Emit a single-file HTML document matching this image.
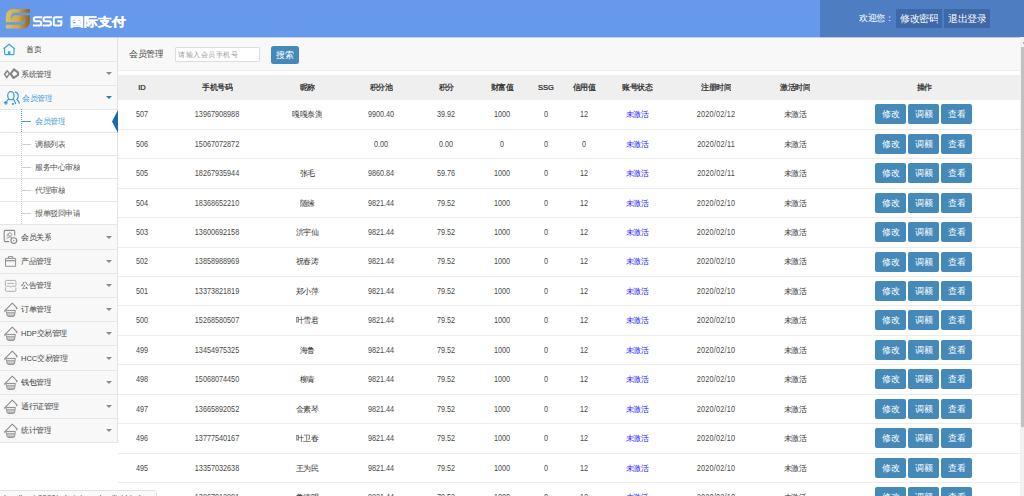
<!DOCTYPE html>
<html><head><meta charset="utf-8">
<style>
*{margin:0;padding:0;box-sizing:border-box}
html,body{width:1024px;height:496px;overflow:hidden;background:#fff;font-family:"Liberation Sans",sans-serif;color:#333}
.abs{position:absolute}
.x{position:absolute;transform-origin:0 0;transform:scale(.5);white-space:nowrap;line-height:1}
#hdr{position:absolute;left:0;top:0;width:1024px;height:37px;background:#6699ec}
#hdr .right{position:absolute;left:820px;top:0;width:204px;height:37px;background:#4f7dc2}
.hbtn{position:absolute;top:9px;height:19px;background:#3f68a8}
#side{position:absolute;left:0;top:37px;width:118px;height:406px;background:#f8f8f8;border-right:1px solid #e3e3e3}
.mi{position:absolute;left:0;width:117px;color:#444}
.mi .x{left:21px;top:7.5px;font-size:15px}
.mi .car{position:absolute;left:105.5px;width:0;height:0;border-left:3px solid transparent;border-right:3px solid transparent;border-top:3px solid #8a8a8a}
.mi svg{position:absolute}
.sub{position:absolute;left:0;width:117px;background:#fff;color:#555}
.bd{position:absolute;left:0;width:117px;height:1px;background:#e6e6e6}
.sub .x{left:35px;top:7.5px;font-size:15px}
.sub .dash{position:absolute;left:22px;width:9px;height:1px;background:#d0d0d0}
#vline{position:absolute;left:21px;top:109.4px;width:1px;height:115px;background:repeating-linear-gradient(to bottom,#c8c8c8 0,#c8c8c8 1px,transparent 1px,transparent 2px)}
#content{position:absolute;left:118px;top:37px;width:902px;height:459px}
#toolbar{position:absolute;left:0;top:0;width:902px;height:34px;background:#f8f8f8;border-bottom:1px solid #eee}
.thead{position:absolute;left:0;width:902px;background:#efefef;color:#262626;-webkit-text-stroke:0.45px #262626}
.tr{position:absolute;left:0;width:902px;height:29.44px;border-bottom:1px solid #ececec;color:#333}
.c{position:absolute;width:240px;text-align:center;white-space:nowrap;font-size:15px;line-height:1;transform:scale(.5);transform-origin:50% 50%}
.c.n{font-size:14.5px;transform:scale(.5,.59);color:#4a4a4a}
.c.dt{letter-spacing:0.4px}
.blue{color:#1a1aff}
.ops{position:absolute;top:4px;height:20px;white-space:nowrap;font-size:0}
.btn{position:relative;display:inline-block;width:31px;height:20px;margin-right:2.1px;background:#4589b9;border-radius:2px;vertical-align:top}
.btn .x{left:6.5px;top:5px;font-size:18px;color:#fff;font-style:normal}
#scroll{position:absolute;left:1020px;top:37px;width:4px;height:459px;background:#f1f1f1}
#thumb{position:absolute;left:1021px;top:47px;width:3px;height:380px;background:#c1c1c1}
#status{position:absolute;left:-1px;top:489.7px;width:158px;height:10px;background:#fafafa;border:1px solid #e2e2e2;border-radius:0 3px 0 0;overflow:hidden}
</style></head><body>
<div id="hdr">
  <svg class="abs" style="left:0;top:0" width="70" height="37" viewBox="0 0 70 37">
    <defs><linearGradient id="g" x1="5.9" y1="0" x2="29.8" y2="0" gradientUnits="userSpaceOnUse"><stop offset="0" stop-color="#dcc063"/><stop offset="0.5" stop-color="#cdaa4c"/><stop offset="1" stop-color="#8a6224"/></linearGradient></defs>
    <path d="M14 8.9 H29.8 V21 Q29.8 28.6 22.5 28.6 H5.9 V16.5 Q5.9 8.9 14 8.9 Z" fill="url(#g)"/>
    <path d="M30 12.8 H15 Q10.8 12.8 10.8 17.8 Q10.8 19.2 11.6 19.2 Q12 15.3 15.5 15.3 H30 Z M5.7 24.7 H20.7 Q24.9 24.7 24.9 19.7 Q24.9 18.3 24.1 18.3 Q23.7 22.2 20.2 22.2 H5.7 Z" fill="#6699ec"/>
    <g fill="none" stroke="#fff" stroke-width="2.05">
    <path d="M42.2 17.2 H35.4 Q33.9 17.2 33.9 18.7 V19.8 Q33.9 21.3 35.4 21.3 H39.7 Q41.2 21.3 41.2 22.8 V23.9 Q41.2 25.4 39.7 25.4 H32.9"/>
    <path d="M51.9 17.2 H45.1 Q43.6 17.2 43.6 18.7 V19.8 Q43.6 21.3 45.1 21.3 H49.4 Q50.9 21.3 50.9 22.8 V23.9 Q50.9 25.4 49.4 25.4 H42.6"/>
    <path d="M62.4 17.2 H55.3 Q53.8 17.2 53.8 18.7 V23.9 Q53.8 25.4 55.3 25.4 H59.9 Q61.4 25.4 61.4 23.9 V21.3 H57.4"/>
    </g>
  </svg>
  <div class="x" style="left:69.5px;top:15.5px;font-size:28px;font-weight:bold;color:#fff;-webkit-text-stroke:0.9px #fff;transform:scale(0.505,0.44)">国际支付</div>
  <div class="right"></div>
  <div class="x" style="left:859px;top:14px;color:#fff;font-size:17px">欢迎您：</div>
  <div class="hbtn" style="left:896px;width:46px"><div class="x" style="left:4px;top:4.5px;font-size:19px;color:#fff">修改密码</div></div>
  <div class="hbtn" style="left:944px;width:46px"><div class="x" style="left:4px;top:4.5px;font-size:19px;color:#fff">退出登录</div></div>
</div>

<div id="side">
<div class="mi" style="top:0px;height:24px"><svg style="left:0;top:1px" width="24" height="24" viewBox="0 0 24 24"><path d="M3.4 10.8 L9.1 6.3 L14.8 10.8" fill="none" stroke="#3ea6e2" stroke-width="1.2" stroke-linejoin="round"/><path d="M4.6 9.9 V15.6 Q4.6 16.6 5.6 16.6 H13 Q14 16.6 14 15.6 V9.9" fill="none" stroke="#3ea6e2" stroke-width="1.15"/><path d="M8 16.6 V14.1 Q8 13 9.2 13 Q10.4 13 10.4 14.1 V16.6 Z" fill="#3ea6e2"/></svg><div class="x" style="left:26px;top:8.20px">首页</div></div><div class="bd" style="top:24px"></div>
<div class="mi" style="top:25px;height:23px"><svg style="left:0;top:0px" width="24" height="24" viewBox="0 0 24 24"><path d="M4.5 12.2 L7.2 8.7 L9.4 11.6 L6.8 15.6 Z" fill="none" stroke="#858585" stroke-width="1.45" stroke-linejoin="round"/><path d="M10.5 11.9 L14 7.4 L18.1 10.6 V12.9 L13.6 16 Z" fill="none" stroke="#858585" stroke-width="2.1" stroke-linejoin="round"/></svg><div class="x" style="top:7.70px">系统管理</div><div class="car" style="top:10.30px;"></div></div><div class="bd" style="top:48px"></div>
<div class="mi" style="top:49px;height:23px"><svg style="left:0;top:0px" width="24" height="24" viewBox="0 0 24 24"><ellipse cx="10.9" cy="9.7" rx="3.2" ry="4.1" fill="none" stroke="#3a9ad9" stroke-width="1.25"/><path d="M8.6 13 L6.8 15.2 M13.2 13.2 Q14.8 15 15.6 17.6 M15.3 6.2 Q18.4 6.9 18.2 10.4 Q18 12.4 16.9 13.4 Q18.7 15 19.4 17.2" fill="none" stroke="#3a9ad9" stroke-width="1.2" stroke-linecap="round"/><path d="M3.9 16.8 H7.7 M5.8 14.9 V18.7" stroke="#3a9ad9" stroke-width="1.4"/><rect x="12" y="17" width="1.8" height="1.8" fill="#3a9ad9"/></svg><div class="x" style="left:22px;color:#3d9ad8;top:7.70px">会员管理</div><div class="car" style="top:10.30px;border-top-color:#2a7ab8"></div></div><div class="bd" style="top:72px"></div>
<div class="sub" style="top:73px;height:22px"><div class="dash" style="top:11.10px;background:#3d9ad8;"></div><div class="x" style="color:#3d9ad8;top:6.80px">会员管理</div></div><div class="bd" style="top:95px"></div>
<div class="sub" style="top:96px;height:22px"><div class="dash" style="top:11.10px;"></div><div class="x" style="top:6.80px">调额列表</div></div><div class="bd" style="top:118px"></div>
<div class="sub" style="top:119px;height:22px"><div class="dash" style="top:11.10px;"></div><div class="x" style="top:6.80px">服务中心审核</div></div><div class="bd" style="top:141px"></div>
<div class="sub" style="top:142px;height:22px"><div class="dash" style="top:11.10px;"></div><div class="x" style="top:6.80px">代理审核</div></div><div class="bd" style="top:164px"></div>
<div class="sub" style="top:165px;height:22px"><div class="dash" style="top:11.10px;"></div><div class="x" style="top:6.80px">报单驳回申请</div></div><div class="bd" style="top:187px"></div>
<svg class="abs" style="left:112px;top:72.9px" width="6" height="23" viewBox="0 0 6 23"><path d="M6 0 L0 11.5 L6 23 Z" fill="#186aab"/></svg>
<div class="mi" style="top:188px;height:24px"><svg style="left:0;top:0px" width="24" height="24" viewBox="0 0 24 24"><path d="M9.2 16.6 H5.3 Q4.2 16.6 4.2 15.5 V6.5 Q4.2 5.4 5.3 5.4 H13.6 Q14.7 5.4 14.7 6.5 V10.6" fill="none" stroke="#8a8a8a" stroke-width="1.1"/><circle cx="10" cy="9.5" r="1.7" fill="none" stroke="#999" stroke-width="0.9"/><path d="M6.4 14.2 Q7.4 11.8 10 11.9 Q11.4 12 12.1 12.6 M6.8 11.6 L8.3 8.3" fill="none" stroke="#999" stroke-width="0.9"/><circle cx="13.8" cy="15.6" r="2.9" fill="none" stroke="#888" stroke-width="1.15"/><rect x="13.1" y="14.9" width="1.4" height="1.4" fill="#999"/></svg><div class="x" style="top:7.90px">会员关系</div><div class="car" style="top:10.80px"></div></div><div class="bd" style="top:212px"></div>
<div class="mi" style="top:213px;height:23px"><svg style="left:0;top:-1px" width="24" height="24" viewBox="0 0 24 24"><path d="M5.5 9.4 H15.6 V17.3 H5.5 Z M8.5 9.2 V7.6 H12.7 V9.2" fill="none" stroke="#8c8c8c" stroke-width="0.95"/><path d="M5.8 11.7 H15.3" stroke="#8c8c8c" stroke-width="1.2"/></svg><div class="x" style="top:7.40px">产品管理</div><div class="car" style="top:10.30px"></div></div><div class="bd" style="top:236px"></div>
<div class="mi" style="top:237px;height:23px"><svg style="left:0;top:-1px" width="24" height="24" viewBox="0 0 24 24"><path d="M6.6 7.4 H14.7 Q15.9 7.4 15.9 8.6 V12.6 M5.4 12.6 V8.6 Q5.4 7.4 6.6 7.4 M5.4 12.6 Q6.2 13.8 7.3 13.2 Q8.6 12.5 9.5 13.5 Q10.6 14.4 11.8 13.5 Q12.8 12.5 14 13.2 Q15.1 13.8 15.9 12.6 M5.4 14.4 V17.2 Q5.4 18.3 6.6 18.3 H14.7 Q15.9 18.3 15.9 17.2 V14.4" fill="none" stroke="#a8a8a8" stroke-width="0.95"/><path d="M7.4 10.4 H14" stroke="#b0b0b0" stroke-width="1"/></svg><div class="x" style="top:7.40px">公告管理</div><div class="car" style="top:10.30px"></div></div><div class="bd" style="top:260px"></div>
<div class="mi" style="top:261px;height:23px"><svg style="left:0;top:-1px" width="24" height="24" viewBox="0 0 24 24"><path d="M4.2 14.4 L12.3 6.1 L17.2 11.2 L16 12.2" fill="none" stroke="#8a8a8a" stroke-width="1.05" stroke-linejoin="round"/><path d="M4.6 14.6 L6.2 13.4 H15.3 L14.6 18.2 Q14.4 19.4 13 19.4 H8.6 Q7.2 19.4 7 18.2 L6.5 14.4" fill="none" stroke="#8a8a8a" stroke-width="1"/><path d="M6.9 15.4 H14.9 M7.1 16.9 H14.7 M7.4 18.3 H14.4" stroke="#999" stroke-width="0.9"/></svg><div class="x" style="top:7.40px">订单管理</div><div class="car" style="top:10.30px"></div></div><div class="bd" style="top:284px"></div>
<div class="mi" style="top:285px;height:23px"><svg style="left:0;top:-1px" width="24" height="24" viewBox="0 0 24 24"><path d="M4.2 14.4 L12.3 6.1 L17.2 11.2 L16 12.2" fill="none" stroke="#8a8a8a" stroke-width="1.05" stroke-linejoin="round"/><path d="M4.6 14.6 L6.2 13.4 H15.3 L14.6 18.2 Q14.4 19.4 13 19.4 H8.6 Q7.2 19.4 7 18.2 L6.5 14.4" fill="none" stroke="#8a8a8a" stroke-width="1"/><path d="M6.9 15.4 H14.9 M7.1 16.9 H14.7 M7.4 18.3 H14.4" stroke="#999" stroke-width="0.9"/></svg><div class="x" style="top:7.40px">HDP交易管理</div><div class="car" style="top:10.30px"></div></div><div class="bd" style="top:308px"></div>
<div class="mi" style="top:309px;height:24px"><svg style="left:0;top:-1px" width="24" height="24" viewBox="0 0 24 24"><path d="M4.2 14.4 L12.3 6.1 L17.2 11.2 L16 12.2" fill="none" stroke="#8a8a8a" stroke-width="1.05" stroke-linejoin="round"/><path d="M4.6 14.6 L6.2 13.4 H15.3 L14.6 18.2 Q14.4 19.4 13 19.4 H8.6 Q7.2 19.4 7 18.2 L6.5 14.4" fill="none" stroke="#8a8a8a" stroke-width="1"/><path d="M6.9 15.4 H14.9 M7.1 16.9 H14.7 M7.4 18.3 H14.4" stroke="#999" stroke-width="0.9"/></svg><div class="x" style="top:7.90px">HCC交易管理</div><div class="car" style="top:10.80px"></div></div><div class="bd" style="top:333px"></div>
<div class="mi" style="top:334px;height:23px"><svg style="left:0;top:-1px" width="24" height="24" viewBox="0 0 24 24"><path d="M4.2 14.4 L12.3 6.1 L17.2 11.2 L16 12.2" fill="none" stroke="#8a8a8a" stroke-width="1.05" stroke-linejoin="round"/><path d="M4.6 14.6 L6.2 13.4 H15.3 L14.6 18.2 Q14.4 19.4 13 19.4 H8.6 Q7.2 19.4 7 18.2 L6.5 14.4" fill="none" stroke="#8a8a8a" stroke-width="1"/><path d="M6.9 15.4 H14.9 M7.1 16.9 H14.7 M7.4 18.3 H14.4" stroke="#999" stroke-width="0.9"/></svg><div class="x" style="top:7.40px">钱包管理</div><div class="car" style="top:10.30px"></div></div><div class="bd" style="top:357px"></div>
<div class="mi" style="top:358px;height:23px"><svg style="left:0;top:-1px" width="24" height="24" viewBox="0 0 24 24"><path d="M4.2 14.4 L12.3 6.1 L17.2 11.2 L16 12.2" fill="none" stroke="#8a8a8a" stroke-width="1.05" stroke-linejoin="round"/><path d="M4.6 14.6 L6.2 13.4 H15.3 L14.6 18.2 Q14.4 19.4 13 19.4 H8.6 Q7.2 19.4 7 18.2 L6.5 14.4" fill="none" stroke="#8a8a8a" stroke-width="1"/><path d="M6.9 15.4 H14.9 M7.1 16.9 H14.7 M7.4 18.3 H14.4" stroke="#999" stroke-width="0.9"/></svg><div class="x" style="top:7.40px">通行证管理</div><div class="car" style="top:10.30px"></div></div><div class="bd" style="top:381px"></div>
<div class="mi" style="top:382px;height:23px"><svg style="left:0;top:-1px" width="24" height="24" viewBox="0 0 24 24"><path d="M4.2 14.4 L12.3 6.1 L17.2 11.2 L16 12.2" fill="none" stroke="#8a8a8a" stroke-width="1.05" stroke-linejoin="round"/><path d="M4.6 14.6 L6.2 13.4 H15.3 L14.6 18.2 Q14.4 19.4 13 19.4 H8.6 Q7.2 19.4 7 18.2 L6.5 14.4" fill="none" stroke="#8a8a8a" stroke-width="1"/><path d="M6.9 15.4 H14.9 M7.1 16.9 H14.7 M7.4 18.3 H14.4" stroke="#999" stroke-width="0.9"/></svg><div class="x" style="top:7.40px">统计管理</div><div class="car" style="top:10.30px"></div></div><div class="bd" style="top:405px"></div>
</div>
<div id="vline"></div><div class="abs" style="left:21px;top:109.4px;width:1px;height:23px;background:repeating-linear-gradient(to bottom,#3d9ad8 0,#3d9ad8 1px,transparent 1px,transparent 2px)"></div>

<div id="content">
  <div id="toolbar">
    <div class="x" style="left:11px;top:12.6px;font-size:17px;color:#444">会员管理</div>
    <div class="abs" style="left:57px;top:9.5px;width:85px;height:15.5px;background:#fff;border:1px solid #ddd;border-radius:1px"><div class="x" style="left:1.5px;top:3px;font-size:14.8px;color:#999">请输入会员手机号</div></div>
    <div class="abs" style="left:153px;top:8.5px;width:28px;height:18.5px;background:#4589b9;border-radius:2.5px"><div class="x" style="left:5px;top:4.5px;font-size:18px;color:#fff">搜索</div></div>
  </div>
  <div class="thead" style="top:38.2px;height:25.16px">
<div class="c " style="left:-96.2px;top:4.9px">ID</div>
<div class="c " style="left:-20.8px;top:4.9px">手机号码</div>
<div class="c " style="left:69.2px;top:4.9px">昵称</div>
<div class="c " style="left:143.4px;top:4.9px">积分池</div>
<div class="c " style="left:207.7px;top:4.9px">积分</div>
<div class="c " style="left:263.9px;top:4.9px">财富值</div>
<div class="c " style="left:308.3px;top:4.9px">SSG</div>
<div class="c " style="left:346.0px;top:4.9px">信用值</div>
<div class="c " style="left:399.3px;top:4.9px">账号状态</div>
<div class="c " style="left:477.7px;top:4.9px">注册时间</div>
<div class="c " style="left:556.6px;top:4.9px">激活时间</div>
<div class="c " style="left:685.9px;top:4.9px">操作</div>
</div>
<div class="tr" style="top:63.36px">
<div class="c n" style="left:-96.2px;top:6.9px">507</div>
<div class="c n" style="left:-20.8px;top:6.9px">13967908988</div>
<div class="c " style="left:69.2px;top:6.9px">嘎嘎奈測</div>
<div class="c n" style="left:143.4px;top:6.9px">9900.40</div>
<div class="c n" style="left:207.7px;top:6.9px">39.92</div>
<div class="c n" style="left:263.9px;top:6.9px">1000</div>
<div class="c n" style="left:308.3px;top:6.9px">0</div>
<div class="c n" style="left:346.0px;top:6.9px">12</div>
<div class="c " style="left:399.3px;top:6.9px"><span class="blue">未激活</span></div>
<div class="c n dt" style="left:477.7px;top:6.9px">2020/02/12</div>
<div class="c " style="left:556.6px;top:6.9px">未激活</div>
<div class="ops" style="left:757px"><span class="btn"><i class="x">修改</i></span><span class="btn"><i class="x">调额</i></span><span class="btn"><i class="x">查看</i></span></div>
</div>
<div class="tr" style="top:92.80px">
<div class="c n" style="left:-96.2px;top:6.9px">506</div>
<div class="c n" style="left:-20.8px;top:6.9px">15067072872</div>
<div class="c " style="left:69.2px;top:6.9px"></div>
<div class="c n" style="left:143.4px;top:6.9px">0.00</div>
<div class="c n" style="left:207.7px;top:6.9px">0.00</div>
<div class="c n" style="left:263.9px;top:6.9px">0</div>
<div class="c n" style="left:308.3px;top:6.9px">0</div>
<div class="c n" style="left:346.0px;top:6.9px">0</div>
<div class="c " style="left:399.3px;top:6.9px"><span class="blue">未激活</span></div>
<div class="c n dt" style="left:477.7px;top:6.9px">2020/02/11</div>
<div class="c " style="left:556.6px;top:6.9px">未激活</div>
<div class="ops" style="left:757px"><span class="btn"><i class="x">修改</i></span><span class="btn"><i class="x">调额</i></span><span class="btn"><i class="x">查看</i></span></div>
</div>
<div class="tr" style="top:122.24px">
<div class="c n" style="left:-96.2px;top:6.9px">505</div>
<div class="c n" style="left:-20.8px;top:6.9px">18267935944</div>
<div class="c " style="left:69.2px;top:6.9px">张毛</div>
<div class="c n" style="left:143.4px;top:6.9px">9860.84</div>
<div class="c n" style="left:207.7px;top:6.9px">59.76</div>
<div class="c n" style="left:263.9px;top:6.9px">1000</div>
<div class="c n" style="left:308.3px;top:6.9px">0</div>
<div class="c n" style="left:346.0px;top:6.9px">12</div>
<div class="c " style="left:399.3px;top:6.9px"><span class="blue">未激活</span></div>
<div class="c n dt" style="left:477.7px;top:6.9px">2020/02/11</div>
<div class="c " style="left:556.6px;top:6.9px">未激活</div>
<div class="ops" style="left:757px"><span class="btn"><i class="x">修改</i></span><span class="btn"><i class="x">调额</i></span><span class="btn"><i class="x">查看</i></span></div>
</div>
<div class="tr" style="top:151.68px">
<div class="c n" style="left:-96.2px;top:6.9px">504</div>
<div class="c n" style="left:-20.8px;top:6.9px">18368652210</div>
<div class="c " style="left:69.2px;top:6.9px">随缘</div>
<div class="c n" style="left:143.4px;top:6.9px">9821.44</div>
<div class="c n" style="left:207.7px;top:6.9px">79.52</div>
<div class="c n" style="left:263.9px;top:6.9px">1000</div>
<div class="c n" style="left:308.3px;top:6.9px">0</div>
<div class="c n" style="left:346.0px;top:6.9px">12</div>
<div class="c " style="left:399.3px;top:6.9px"><span class="blue">未激活</span></div>
<div class="c n dt" style="left:477.7px;top:6.9px">2020/02/10</div>
<div class="c " style="left:556.6px;top:6.9px">未激活</div>
<div class="ops" style="left:757px"><span class="btn"><i class="x">修改</i></span><span class="btn"><i class="x">调额</i></span><span class="btn"><i class="x">查看</i></span></div>
</div>
<div class="tr" style="top:181.12px">
<div class="c n" style="left:-96.2px;top:6.9px">503</div>
<div class="c n" style="left:-20.8px;top:6.9px">13600692158</div>
<div class="c " style="left:69.2px;top:6.9px">洪宇仙</div>
<div class="c n" style="left:143.4px;top:6.9px">9821.44</div>
<div class="c n" style="left:207.7px;top:6.9px">79.52</div>
<div class="c n" style="left:263.9px;top:6.9px">1000</div>
<div class="c n" style="left:308.3px;top:6.9px">0</div>
<div class="c n" style="left:346.0px;top:6.9px">12</div>
<div class="c " style="left:399.3px;top:6.9px"><span class="blue">未激活</span></div>
<div class="c n dt" style="left:477.7px;top:6.9px">2020/02/10</div>
<div class="c " style="left:556.6px;top:6.9px">未激活</div>
<div class="ops" style="left:757px"><span class="btn"><i class="x">修改</i></span><span class="btn"><i class="x">调额</i></span><span class="btn"><i class="x">查看</i></span></div>
</div>
<div class="tr" style="top:210.56px">
<div class="c n" style="left:-96.2px;top:6.9px">502</div>
<div class="c n" style="left:-20.8px;top:6.9px">13858988969</div>
<div class="c " style="left:69.2px;top:6.9px">祝春涛</div>
<div class="c n" style="left:143.4px;top:6.9px">9821.44</div>
<div class="c n" style="left:207.7px;top:6.9px">79.52</div>
<div class="c n" style="left:263.9px;top:6.9px">1000</div>
<div class="c n" style="left:308.3px;top:6.9px">0</div>
<div class="c n" style="left:346.0px;top:6.9px">12</div>
<div class="c " style="left:399.3px;top:6.9px"><span class="blue">未激活</span></div>
<div class="c n dt" style="left:477.7px;top:6.9px">2020/02/10</div>
<div class="c " style="left:556.6px;top:6.9px">未激活</div>
<div class="ops" style="left:757px"><span class="btn"><i class="x">修改</i></span><span class="btn"><i class="x">调额</i></span><span class="btn"><i class="x">查看</i></span></div>
</div>
<div class="tr" style="top:240.00px">
<div class="c n" style="left:-96.2px;top:6.9px">501</div>
<div class="c n" style="left:-20.8px;top:6.9px">13373821819</div>
<div class="c " style="left:69.2px;top:6.9px">郑小萍</div>
<div class="c n" style="left:143.4px;top:6.9px">9821.44</div>
<div class="c n" style="left:207.7px;top:6.9px">79.52</div>
<div class="c n" style="left:263.9px;top:6.9px">1000</div>
<div class="c n" style="left:308.3px;top:6.9px">0</div>
<div class="c n" style="left:346.0px;top:6.9px">12</div>
<div class="c " style="left:399.3px;top:6.9px"><span class="blue">未激活</span></div>
<div class="c n dt" style="left:477.7px;top:6.9px">2020/02/10</div>
<div class="c " style="left:556.6px;top:6.9px">未激活</div>
<div class="ops" style="left:757px"><span class="btn"><i class="x">修改</i></span><span class="btn"><i class="x">调额</i></span><span class="btn"><i class="x">查看</i></span></div>
</div>
<div class="tr" style="top:269.44px">
<div class="c n" style="left:-96.2px;top:6.9px">500</div>
<div class="c n" style="left:-20.8px;top:6.9px">15268580507</div>
<div class="c " style="left:69.2px;top:6.9px">叶雪君</div>
<div class="c n" style="left:143.4px;top:6.9px">9821.44</div>
<div class="c n" style="left:207.7px;top:6.9px">79.52</div>
<div class="c n" style="left:263.9px;top:6.9px">1000</div>
<div class="c n" style="left:308.3px;top:6.9px">0</div>
<div class="c n" style="left:346.0px;top:6.9px">12</div>
<div class="c " style="left:399.3px;top:6.9px"><span class="blue">未激活</span></div>
<div class="c n dt" style="left:477.7px;top:6.9px">2020/02/10</div>
<div class="c " style="left:556.6px;top:6.9px">未激活</div>
<div class="ops" style="left:757px"><span class="btn"><i class="x">修改</i></span><span class="btn"><i class="x">调额</i></span><span class="btn"><i class="x">查看</i></span></div>
</div>
<div class="tr" style="top:298.88px">
<div class="c n" style="left:-96.2px;top:6.9px">499</div>
<div class="c n" style="left:-20.8px;top:6.9px">13454975325</div>
<div class="c " style="left:69.2px;top:6.9px">海鲁</div>
<div class="c n" style="left:143.4px;top:6.9px">9821.44</div>
<div class="c n" style="left:207.7px;top:6.9px">79.52</div>
<div class="c n" style="left:263.9px;top:6.9px">1000</div>
<div class="c n" style="left:308.3px;top:6.9px">0</div>
<div class="c n" style="left:346.0px;top:6.9px">12</div>
<div class="c " style="left:399.3px;top:6.9px"><span class="blue">未激活</span></div>
<div class="c n dt" style="left:477.7px;top:6.9px">2020/02/10</div>
<div class="c " style="left:556.6px;top:6.9px">未激活</div>
<div class="ops" style="left:757px"><span class="btn"><i class="x">修改</i></span><span class="btn"><i class="x">调额</i></span><span class="btn"><i class="x">查看</i></span></div>
</div>
<div class="tr" style="top:328.32px">
<div class="c n" style="left:-96.2px;top:6.9px">498</div>
<div class="c n" style="left:-20.8px;top:6.9px">15068074450</div>
<div class="c " style="left:69.2px;top:6.9px">柳青</div>
<div class="c n" style="left:143.4px;top:6.9px">9821.44</div>
<div class="c n" style="left:207.7px;top:6.9px">79.52</div>
<div class="c n" style="left:263.9px;top:6.9px">1000</div>
<div class="c n" style="left:308.3px;top:6.9px">0</div>
<div class="c n" style="left:346.0px;top:6.9px">12</div>
<div class="c " style="left:399.3px;top:6.9px"><span class="blue">未激活</span></div>
<div class="c n dt" style="left:477.7px;top:6.9px">2020/02/10</div>
<div class="c " style="left:556.6px;top:6.9px">未激活</div>
<div class="ops" style="left:757px"><span class="btn"><i class="x">修改</i></span><span class="btn"><i class="x">调额</i></span><span class="btn"><i class="x">查看</i></span></div>
</div>
<div class="tr" style="top:357.76px">
<div class="c n" style="left:-96.2px;top:6.9px">497</div>
<div class="c n" style="left:-20.8px;top:6.9px">13665892052</div>
<div class="c " style="left:69.2px;top:6.9px">金素琴</div>
<div class="c n" style="left:143.4px;top:6.9px">9821.44</div>
<div class="c n" style="left:207.7px;top:6.9px">79.52</div>
<div class="c n" style="left:263.9px;top:6.9px">1000</div>
<div class="c n" style="left:308.3px;top:6.9px">0</div>
<div class="c n" style="left:346.0px;top:6.9px">12</div>
<div class="c " style="left:399.3px;top:6.9px"><span class="blue">未激活</span></div>
<div class="c n dt" style="left:477.7px;top:6.9px">2020/02/10</div>
<div class="c " style="left:556.6px;top:6.9px">未激活</div>
<div class="ops" style="left:757px"><span class="btn"><i class="x">修改</i></span><span class="btn"><i class="x">调额</i></span><span class="btn"><i class="x">查看</i></span></div>
</div>
<div class="tr" style="top:387.20px">
<div class="c n" style="left:-96.2px;top:6.9px">496</div>
<div class="c n" style="left:-20.8px;top:6.9px">13777540167</div>
<div class="c " style="left:69.2px;top:6.9px">叶卫春</div>
<div class="c n" style="left:143.4px;top:6.9px">9821.44</div>
<div class="c n" style="left:207.7px;top:6.9px">79.52</div>
<div class="c n" style="left:263.9px;top:6.9px">1000</div>
<div class="c n" style="left:308.3px;top:6.9px">0</div>
<div class="c n" style="left:346.0px;top:6.9px">12</div>
<div class="c " style="left:399.3px;top:6.9px"><span class="blue">未激活</span></div>
<div class="c n dt" style="left:477.7px;top:6.9px">2020/02/10</div>
<div class="c " style="left:556.6px;top:6.9px">未激活</div>
<div class="ops" style="left:757px"><span class="btn"><i class="x">修改</i></span><span class="btn"><i class="x">调额</i></span><span class="btn"><i class="x">查看</i></span></div>
</div>
<div class="tr" style="top:416.64px">
<div class="c n" style="left:-96.2px;top:6.9px">495</div>
<div class="c n" style="left:-20.8px;top:6.9px">13357032638</div>
<div class="c " style="left:69.2px;top:6.9px">王为民</div>
<div class="c n" style="left:143.4px;top:6.9px">9821.44</div>
<div class="c n" style="left:207.7px;top:6.9px">79.52</div>
<div class="c n" style="left:263.9px;top:6.9px">1000</div>
<div class="c n" style="left:308.3px;top:6.9px">0</div>
<div class="c n" style="left:346.0px;top:6.9px">12</div>
<div class="c " style="left:399.3px;top:6.9px"><span class="blue">未激活</span></div>
<div class="c n dt" style="left:477.7px;top:6.9px">2020/02/10</div>
<div class="c " style="left:556.6px;top:6.9px">未激活</div>
<div class="ops" style="left:757px"><span class="btn"><i class="x">修改</i></span><span class="btn"><i class="x">调额</i></span><span class="btn"><i class="x">查看</i></span></div>
</div>
<div class="tr" style="top:446.08px">
<div class="c n" style="left:-96.2px;top:6.9px">494</div>
<div class="c n" style="left:-20.8px;top:6.9px">13867912881</div>
<div class="c " style="left:69.2px;top:6.9px">鲁德明</div>
<div class="c n" style="left:143.4px;top:6.9px">9821.44</div>
<div class="c n" style="left:207.7px;top:6.9px">79.52</div>
<div class="c n" style="left:263.9px;top:6.9px">1000</div>
<div class="c n" style="left:308.3px;top:6.9px">0</div>
<div class="c n" style="left:346.0px;top:6.9px">12</div>
<div class="c " style="left:399.3px;top:6.9px"><span class="blue">未激活</span></div>
<div class="c n dt" style="left:477.7px;top:6.9px">2020/02/10</div>
<div class="c " style="left:556.6px;top:6.9px">未激活</div>
<div class="ops" style="left:757px"><span class="btn"><i class="x">修改</i></span><span class="btn"><i class="x">调额</i></span><span class="btn"><i class="x">查看</i></span></div>
</div>
</div>
<div class="abs" style="left:0;top:37px;width:820px;height:1px;background:rgba(102,153,236,0.4)"></div><div class="abs" style="left:820px;top:37px;width:204px;height:1px;background:rgba(79,125,194,0.4)"></div>
<div id="scroll"></div><div class="abs" style="left:1022.5px;top:42px;width:1.5px;height:2px;background:#aaa"></div>
<div id="thumb"></div>
<div id="status"><div class="x" style="left:4px;top:2.2px;font-size:16px;color:#555">localhost:8080/admin/member/list.html</div></div>
</body></html>
